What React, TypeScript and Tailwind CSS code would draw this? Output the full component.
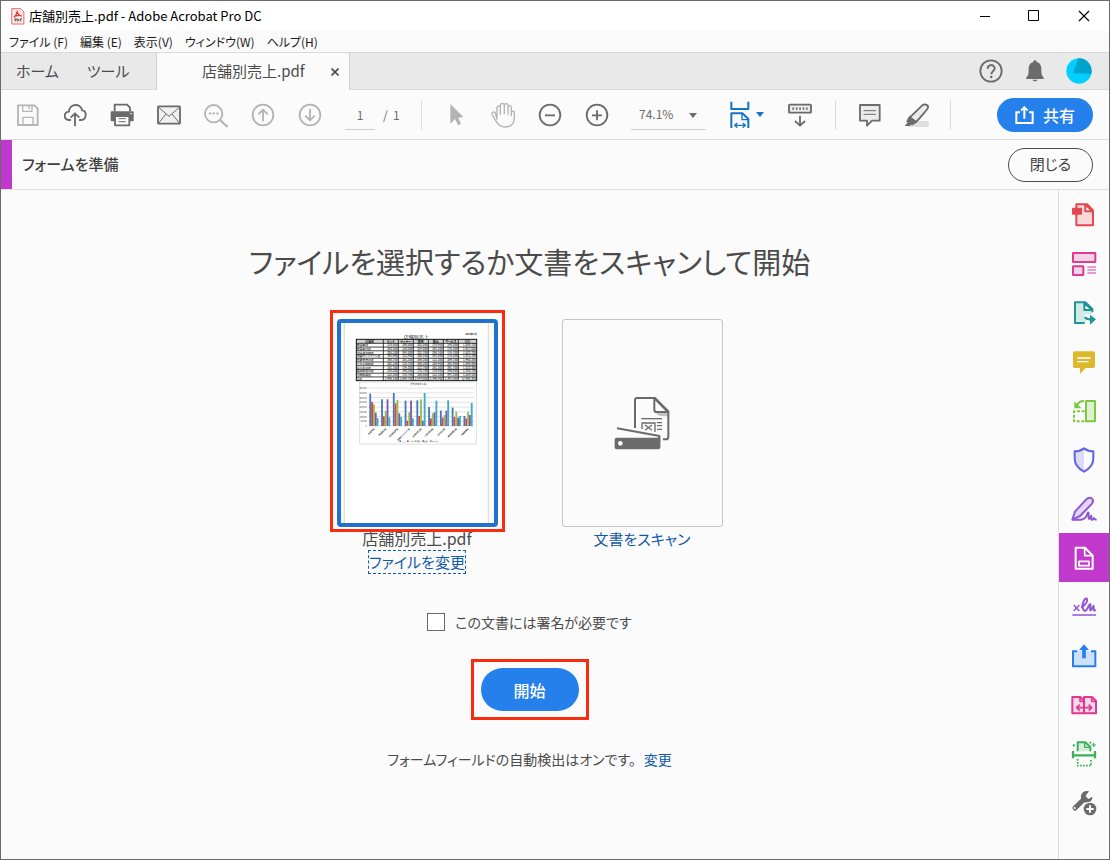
import React from "react";

type IconProps = {
  box: string;
  className?: string;
  weight?: number;
  children: React.ReactNode;
};

function Icon({ box, className = "size-7", weight = 5.5, children }: IconProps) {
  return (
    <svg
      viewBox={box}
      className={`shrink-0 ${className}`}
      fill="none"
      stroke="currentColor"
      strokeWidth={weight}
      strokeLinejoin="round"
      aria-hidden="true"
    >
      {children}
    </svg>
  );
}

function ToolButton({
  label,
  muted = false,
  children,
}: {
  label: string;
  muted?: boolean;
  children: React.ReactNode;
}) {
  return (
    <button
      type="button"
      aria-label={label}
      className={`flex h-10 w-[47px] shrink-0 items-center justify-center ${
        muted ? "text-[#b4b4b4]" : "text-[#6b6b6b]"
      }`}
    >
      {children}
    </button>
  );
}

function Divider() {
  return <div className="h-[30px] w-px shrink-0 bg-[#dcdcdc]" />;
}

function TitleBar() {
  return (
    <header className="flex h-[30px] items-center bg-white pl-[9px] text-[13px] text-black">
      <Icon box="28 22 45 52" className="h-[17px] w-[15px] text-[#f0615f]">
        <path d="M33 24h27l10 10v37H33z" fill="#fdecea" strokeWidth={3} />
        <path
          d="M50 30c-1 8-4 15-10 21M50 36c3 6 7 10 14 11M43 47c6-2 12-3 18-2"
          strokeWidth={3.5}
          stroke="#e5322d"
        />
        <path d="M43 63v-8h4v4h-4M51 63v-8l4 4-4 4M59 63v-8h5M59 59h4" stroke="#222" strokeWidth={2} />
      </Icon>
      <h1 className="ml-1 flex-1 whitespace-nowrap">店舗別売上.pdf - Adobe Acrobat Pro DC</h1>
      <div className="flex h-full text-black">
        <button type="button" aria-label="最小化" className="flex w-[49px] items-center justify-center">
          <svg viewBox="0 0 12 12" className="size-3" stroke="currentColor" aria-hidden="true">
            <path d="M1 6.5h10" />
          </svg>
        </button>
        <button type="button" aria-label="最大化" className="flex w-[49px] items-center justify-center">
          <svg viewBox="0 0 12 12" className="size-3" fill="none" stroke="currentColor" aria-hidden="true">
            <path d="M0.5 0.5h10v10h-10z" />
          </svg>
        </button>
        <button type="button" aria-label="ウィンドウを閉じる" className="flex w-[51px] items-center justify-center">
          <svg viewBox="0 0 12 12" className="size-3" stroke="currentColor" strokeWidth={1.2} aria-hidden="true">
            <path d="M1 1l10 10M11 1L1 11" />
          </svg>
        </button>
      </div>
    </header>
  );
}

const menus = ["ファイル (F)", "編集 (E)", "表示(V)", "ウィンドウ(W)", "ヘルプ(H)"];

function MenuBar() {
  return (
    <nav className="flex h-[21px] items-center gap-3 bg-[#fafafa] pl-2 text-xs text-[#1a1a1a]">
      {menus.map((m) => (
        <button key={m} type="button" className="whitespace-nowrap">
          {m}
        </button>
      ))}
    </nav>
  );
}

function TabBar() {
  return (
    <div className="flex h-[38px] border-y border-[#d9d9d9] bg-[#e9e9e9] text-[15px] text-[#4b4b4b]">
      <div className="flex w-[155px] shrink-0 items-center gap-7 pl-[15px]">
        <button type="button">ホーム</button>
        <button type="button">ツール</button>
      </div>
      <div className="-mb-px flex w-[194px] shrink-0 items-center border-x border-[#d0d0d0] bg-[#fbfbfb] pl-[45px]">
        <span className="flex-1 whitespace-nowrap">店舗別売上.pdf</span>
        <button type="button" aria-label="タブを閉じる" className="flex w-7 items-center justify-center">
          <svg viewBox="0 0 8 8" className="size-2" stroke="currentColor" strokeWidth={1.6} aria-hidden="true">
            <path d="M0.5 0.5l7 7M7.5 0.5l-7 7" />
          </svg>
        </button>
      </div>
      <div className="flex flex-1 items-center justify-end pr-2 text-[#6b6b6b]">
        <button type="button" aria-label="ヘルプ" className="flex w-11 justify-center">
          <Icon box="713 171 84 84">
            <circle cx={755} cy={213} r={32} />
            <path d="M745 206c0-14 21-14 21-1 0 8-10 9-10 18" strokeWidth={6} />
            <circle cx={755.5} cy={231} r={4} fill="currentColor" stroke="none" />
          </Icon>
        </button>
        <button type="button" aria-label="通知" className="flex w-11 justify-center">
          <Icon box="845 173 84 84">
            <path
              d="M887 183c3 0 5 2 5 5 11 3 14 11 14 22 0 16 2 20 7 24v5h-52v-5c5-4 7-8 7-24 0-11 3-19 14-22 0-3 2-5 5-5z"
              fill="currentColor"
              stroke="none"
            />
            <path d="M880 241h14c-1 6-13 6-14 0z" fill="currentColor" stroke="none" />
          </Icon>
        </button>
        <button type="button" aria-label="アカウント" className="flex w-11 justify-center">
          <Icon box="981 173 78 78" className="size-[26px]">
            <circle cx={1020} cy={212} r={38} fill="#00cfff" stroke="none" />
            <path d="M1018 174c22-1 40 16 40 40l-2 7-54-2z" fill="#00a3cc" stroke="none" />
          </Icon>
        </button>
      </div>
    </div>
  );
}

function Toolbar() {
  return (
    <div className="flex h-[50px] items-center border-b border-[#dedede] pr-4 pl-[3px] text-[#6b6b6b]">
      <ToolButton label="保存" muted>
        <Icon box="43 303 84 84">
          <path d="M55 316h49l10 10v49H55z" />
          <path d="M69 316v18h28v-18M88 318v10M70 374v-22h30v22" strokeWidth={4} />
        </Icon>
      </ToolButton>
      <ToolButton label="クラウドに保存">
        <Icon box="183 303 84 84">
          <path d="M213 360h-6c-17-1-17-24 0-25 0-25 36-27 39-4 15-1 15 27-1 29h-8" />
          <path d="M225 379v-38M212 353l13-13 13 13" />
        </Icon>
      </ToolButton>
      <ToolButton label="印刷">
        <Icon box="321 303 84 84">
          <path d="M341 334v-20h37l9 9v11" />
          <rect x={329} y={334} width={69} height={30} rx={3} fill="currentColor" stroke="none" />
          <path d="M342 348h43v28h-43z" fill="#fbfbfb" />
          <path d="M353 356h21M353 365h21" strokeWidth={3} />
          <path d="M388 341h5" stroke="#fff" strokeWidth={3} />
        </Icon>
      </ToolButton>
      <ToolButton label="メールで送信">
        <Icon box="466 302 84 84">
          <rect x={475} y={318} width={66} height={52} rx={2} fill="#f0f0f0" />
          <path d="M477 321l31 27 31-27M477 368l22-27M539 368l-22-27" strokeWidth={3} />
        </Icon>
      </ToolButton>
      <ToolButton label="検索" muted>
        <Icon box="608 303 84 84">
          <circle cx={643} cy={341} r={26} />
          <path d="M662 360l23 21" strokeWidth={7} />
          <g fill="currentColor" stroke="none">
            <circle cx={632} cy={340} r={3.5} />
            <circle cx={643} cy={340} r={3.5} />
            <circle cx={654} cy={340} r={3.5} />
          </g>
        </Icon>
      </ToolButton>
      <ToolButton label="前のページ" muted>
        <Icon box="748 303 84 84">
          <circle cx={790} cy={345} r={31} />
          <path d="M790 364v-34M776 343l14-14 14 14" />
        </Icon>
      </ToolButton>
      <ToolButton label="次のページ" muted>
        <Icon box="889 303 84 84">
          <circle cx={931} cy={345} r={31} />
          <path d="M931 326v34M917 347l14 14 14-14" />
        </Icon>
      </ToolButton>
      <div className="ml-3 flex items-center text-xs">
        <input
          aria-label="ページ番号"
          defaultValue="1"
          className="h-[30px] w-[30px] border-b border-[#d0d0d0] bg-transparent text-center"
        />
        <span className="ml-2 w-[38px] whitespace-pre">/  1</span>
      </div>
      <Divider />
      <div className="ml-[10px] flex">
        <ToolButton label="選択ツール" muted>
          <Icon box="215 153 84 84">
            <path
              d="M240 162l39 39-15 2 8 18-9 5-9-19-14 14z"
              fill="currentColor"
              stroke="none"
            />
          </Icon>
        </ToolButton>
        <ToolButton label="手のひらツール" muted>
          <Icon box="355 154 84 84">
            <path
              d="M379 208v-34c0-7 10-7 10 0v20-26c0-9 12-9 12 0v24-24c0-8 11-8 11 0v26-20c0-8 10-8 10 0v24-8c0-7 9-7 9 0v14c0 20-11 28-28 28-13 0-20-6-26-16l-12-20c-4-8 4-12 9-6z"
              strokeWidth={4}
            />
          </Icon>
        </ToolButton>
        <ToolButton label="縮小">
          <Icon box="497 151 84 84">
            <circle cx={539} cy={193} r={31} />
            <path d="M524 194h30" />
          </Icon>
        </ToolButton>
        <ToolButton label="拡大">
          <Icon box="638 151 84 84">
            <circle cx={680} cy={193} r={31} />
            <path d="M665 194h30M680 179v30" />
          </Icon>
        </ToolButton>
      </div>
      <div className="relative ml-[11px]">
        <select
          aria-label="表示倍率"
          className="h-[30px] w-[75px] appearance-none border-b border-[#d0d0d0] bg-transparent pl-2 text-xs"
        >
          <option>74.1%</option>
        </select>
        <svg viewBox="0 0 8 5" className="pointer-events-none absolute top-[13px] right-[9px] h-[5px] w-2" aria-hidden="true">
          <path d="M0 0h8L4 5z" fill="currentColor" />
        </svg>
      </div>
      <button type="button" aria-label="幅に合わせる" className="ml-5 flex items-center gap-[2px] text-[#1473c8]">
        <Icon box="-4 0 84 84" weight={6}>
          <path d="M12 2v22h51V2M12 81V37h33l18 17v27" />
          <path d="M44 39v17h18" strokeWidth={4} />
          <path d="M22 73h32M30 66l-8 7 8 7M46 66l8 7-8 7" strokeWidth={4} />
        </Icon>
        <svg viewBox="0 0 8 5" className="h-[5px] w-2" aria-hidden="true">
          <path d="M0 0h8L4 5z" fill="currentColor" />
        </svg>
      </button>
      <div className="mr-3 ml-3 flex">
        <ToolButton label="入力パネル">
          <Icon box="138 304 84 84">
            <rect x={147} y={315} width={66} height={24} rx={2} fill="#ececec" />
            <path d="M157 327h46" strokeWidth={7} strokeDasharray="5 5.3" />
            <path d="M180 348v30M165 364l15 14 15-14" strokeWidth={5.5} />
          </Icon>
        </ToolButton>
      </div>
      <Divider />
      <div className="mr-[10px] ml-[10px] flex">
        <ToolButton label="コメント">
          <Icon box="347 303 84 84">
            <path d="M359 315h59v47h-23l-15 15v-15h-21z" fill="#ececec" />
            <path d="M370 332h37M370 343h37" strokeWidth={3} />
          </Icon>
        </ToolButton>
        <ToolButton label="ハイライト">
          <Icon box="489 303 84 84">
            <path d="M519 363h47v18h-61z" fill="#dedede" stroke="none" />
            <path d="M509 353l37-36c6-6 20-4 18 6-1 5-33 41-36 43z" fill="#ececec" />
            <path d="M509 352l19 14-12 7-14-9z" fill="currentColor" />
            <path d="M504 366l10 7-5 5h-15z" fill="currentColor" stroke="none" />
          </Icon>
        </ToolButton>
      </div>
      <Divider />
      <button
        type="button"
        className="ml-auto flex h-[34px] w-24 shrink-0 items-center justify-center gap-[9px] rounded-full bg-[#2680eb] text-base font-medium text-white"
      >
        <Icon box="824 315 57 54" className="h-[18px] w-[19px]" weight={6}>
          <path d="M839 334h-11v32h49v-32h-11M852 353v-34M842 329l10-10 10 10" strokeLinejoin="miter" />
        </Icon>
        共有
      </button>
    </div>
  );
}

function FormBar() {
  return (
    <div className="flex h-[50px] items-center border-b border-[#dedede] pr-4 text-[15px] text-[#3f3f3f]">
      <div className="h-full w-[11px] bg-[#c038cc]" />
      <h2 className="ml-[10px] flex-1 font-medium">フォームを準備</h2>
      <button type="button" className="h-[34px] w-[85px] rounded-full border border-[#4b4b4b]">
        閉じる
      </button>
    </div>
  );
}

const tableRows = [
  ["新宿本店", "378,800", "398,000", "302,500", "278,900", "198,500", "1,556,700"],
  ["新宿東口店", "363,500", "210,000", "314,000", "361,200", "178,300", "1,427,000"],
  ["渋谷道玄坂店", "385,200", "341,000", "332,700", "298,100", "176,700", "1,533,700"],
  ["池袋サンシャイン店", "361,900", "122,400", "288,100", "361,500", "178,200", "1,312,100"],
  ["吉祥寺南口店", "360,700", "201,300", "386,300", "122,300", "389,700", "1,460,300"],
  ["八王子駅前店", "301,200", "178,700", "260,200", "288,400", "361,900", "1,390,400"],
  ["立川北口店", "281,100", "176,300", "222,700", "281,500", "361,700", "1,323,300"],
  ["横浜駅西口店", "293,500", "198,300", "278,700", "176,400", "198,800", "1,145,700"],
  ["川崎駅東店", "222,300", "178,700", "288,800", "222,100", "347,200", "1,259,100"],
  ["合計", "2,948,200", "2,004,700", "2,674,000", "2,390,400", "2,391,000", "12,408,300"],
];
const tableHead = ["店舗名", "ランチ", "ディナー", "喫茶", "雑貨", "サービス", "合計"];
const columnEdges = [78, 160, 205, 250, 295, 340, 385, 440];
const barTops = [
  [266, 291, 298, 323, 339],
  [283, 334, 318, 283, 337],
  [264, 295, 285, 325, 336],
  [287, 347, 322, 287, 340],
  [286, 333, 283, 347, 264],
  [306, 340, 325, 322, 287],
  [317, 338, 330, 317, 286],
  [308, 336, 320, 338, 333],
  [333, 340, 320, 330, 294],
];
const barColors = ["#4679bd", "#d64548", "#98bc4e", "#7c5ba4", "#3fa9c8"];

function Thumbnail() {
  return (
    <svg viewBox="33 54 459 600" className="h-[200px] w-[153px]" role="img" aria-label="店舗別売上.pdf のプレビュー">
      <rect x={33} y={54} width={459} height={600} fill="#fafafa" />
      <rect x={43} y={48} width={432} height={612} fill="#fff" stroke="#dfdfdf" strokeWidth={4} />
      <g fill="#111" textAnchor="middle">
        <text x={259} y={101} fontSize={15}>店舗別売上</text>
        <text x={423} y={89} fontSize={7} fontWeight={700}>2018年3月</text>
        <rect x={78} y={103} width={362} height={12} fill="#d4d4d4" />
        {tableHead.map((h, i) => (
          <text key={h} x={(columnEdges[i] + columnEdges[i + 1]) / 2} y={113} fontSize={9} fontWeight={700}>
            {h}
          </text>
        ))}
        {tableRows.map((row, r) =>
          row.map((cell, c) => (
            <text
              key={`${r}-${c}`}
              x={c === 0 ? 80 : columnEdges[c + 1] - 2}
              y={123.5 + r * 11.2}
              fontSize={8.5}
              fontWeight={500}
              textAnchor={c === 0 ? "start" : "end"}
            >
              {cell}
            </text>
          )),
        )}
      </g>
      <g stroke="#111" strokeWidth={2.4} fill="none">
        <rect x={79} y={103} width={361} height={124} strokeWidth={3} />
        {tableRows.map((_, r) => (
          <path key={r} d={`M78 ${115 + r * 11.2}H440`} />
        ))}
        {columnEdges.slice(1, 7).map((x) => (
          <path key={x} d={`M${x} 103V227`} />
        ))}
      </g>
      <rect x={89} y={231} width={350} height={186} fill="#fff" stroke="#dedede" strokeWidth={3} />
      <text x={264} y={241} fontSize={8} textAnchor="middle" fontWeight={500} fill="#222">
        グラフタイトル
      </text>
      {[0, 1, 2, 3, 4, 5, 6, 7, 8].map((i) => (
        <g key={i}>
          <path d={`M115 ${363 - i * 14.2}H433`} stroke="#d4d4d4" strokeWidth={2} />
          <text x={110} y={366 - i * 14.2} fontSize={6} textAnchor="end" fill="#333">
            {i === 0 ? "0" : `${i * 50},000`}
          </text>
        </g>
      ))}
      {barTops.map((group, g) => (
        <g key={g}>
          {group.map((top, b) => (
            <rect
              key={b}
              x={118 + g * 35.3 + b * 5.5}
              y={top}
              width={5.5}
              height={363 - top}
              fill={barColors[b]}
            />
          ))}
          <text
            fontSize={6}
            fontWeight={700}
            fill="#222"
            textAnchor="end"
            transform={`translate(${134 + g * 35.3} 372) rotate(-45)`}
          >
            {tableRows[g][0]}
          </text>
        </g>
      ))}
      {tableHead.slice(1, 6).map((h, i) => (
        <g key={h}>
          <rect x={208 + i * 23} y={406} width={5} height={5} fill={barColors[i]} />
          <text x={214 + i * 23} y={411} fontSize={5} fill="#222">
            {h}
          </text>
        </g>
      ))}
    </svg>
  );
}

function ScannerIcon() {
  return (
    <Icon box="195 259 168 162" className="h-[54px] w-14 text-[#6b6b6b]">
      <path d="M323 309h34v10c-10 2-28 1-34-5z" fill="#c4c4c4" stroke="none" />
      <path d="M258 355v-84q0-6 6-6h54l40 40v76q0 8-8 8h-8" strokeWidth={6} />
      <path d="M316 266v34q0 7 7 7h34z" fill="#fff" strokeWidth={6} />
      <path d="M277 327h62" strokeWidth={4} />
      <path d="M279 358v-18h39v27" strokeWidth={4} />
      <path d="M288 346l21 16M309 346l-21 16" strokeWidth={3.5} />
      <path d="M324 339h15M324 348h15M324 359h15" strokeWidth={4} />
      <path d="M204 356l128 23" strokeWidth={6} />
      <rect x={197} y={384} width={137} height={35} rx={6} fill="currentColor" stroke="none" />
      <path d="M327 377h7v20h-7z" fill="currentColor" stroke="none" />
      <circle cx={214} cy={401} r={7} fill="#fff" stroke="none" />
    </Icon>
  );
}

const linkStyle = "text-[#1259a8]";

function Content() {
  return (
    <main className="flex flex-1 flex-col items-center pt-[51px] text-[#4b4b4b]">
      <h2 className="text-[29px] leading-10 whitespace-nowrap">
        ファイルを選択するか文書をスキャンして開始
      </h2>
      <div className="mt-[38px] flex gap-16 text-[15px] leading-6">
        <div className="flex w-[161px] flex-col items-center">
          <div className="relative">
            <button type="button" className="block overflow-hidden rounded-[4px] border-4 border-[#1f73cc]">
              <Thumbnail />
            </button>
            <div className="pointer-events-none absolute -inset-x-[7px] -top-[9px] -bottom-[5px] border-3 border-[#fa2c0e]" />
          </div>
          <span className="text-base leading-[23px] whitespace-nowrap">店舗別売上.pdf</span>
          <a href="#change-file" className={`border border-dashed border-[#1259a8] leading-[22px] whitespace-nowrap ${linkStyle}`}>
            ファイルを変更
          </a>
        </div>
        <div className="flex w-[161px] flex-col items-center">
          <button
            type="button"
            aria-label="スキャナーを選択"
            className="flex h-[208px] w-full items-center justify-center rounded-[3px] border border-[#c6c6c6]"
          >
            <ScannerIcon />
          </button>
          <a href="#scan" className={`whitespace-nowrap ${linkStyle}`}>
            文書をスキャン
          </a>
        </div>
      </div>
      <label className="mt-9 flex items-center gap-[10px] text-sm leading-6">
        <input
          type="checkbox"
          className="size-[18px] appearance-none border border-[#6b6b6b] bg-white checked:bg-[#2680eb]"
        />
        この文書には署名が必要です
      </label>
      <div className="mt-[25px] border-3 border-[#fa2c0e] px-[7px] py-[6px]">
        <button type="button" className="block h-[43px] w-[98px] rounded-full bg-[#2680eb] text-base font-medium text-white">
          開始
        </button>
      </div>
      <p className="mt-[27px] flex gap-2 text-sm leading-6 whitespace-nowrap">
        フォームフィールドの自動検出はオンです。
        <a href="#auto-detect" className={linkStyle}>
          変更
        </a>
      </p>
    </main>
  );
}

type Tool = { name: string; color: string; box: string; active?: boolean; art: React.ReactNode };

const tools: Tool[] = [
  {
    name: "PDFを作成",
    color: "text-[#e34850]",
    box: "60 30 84 84",
    art: (
      <>
        <path d="M79 72v31h50V58l-17-18H79z" fill="#f7d9da" />
        <path d="M106 41v20h22z" fill="#fff" />
        <rect x={66} y={50} width={30} height={21} rx={3} fill="currentColor" stroke="none" />
      </>
    ),
  },
  {
    name: "ページを整理",
    color: "text-[#dd3a91]",
    box: "60 178 84 84",
    art: (
      <>
        <rect x={69} y={187} width={67} height={27} rx={1} fill="#f3d3e5" />
        <rect x={69} y={227} width={31} height={26} rx={1} fill="#f3d3e5" />
        <path d="M112 229h26M112 238h26M112 247h26" strokeWidth={3} />
      </>
    ),
  },
  {
    name: "PDFを書き出し",
    color: "text-[#1f9498]",
    box: "60 325 84 84",
    art: (
      <>
        <path d="M104 397H75V335h32l20 20v10" fill="#d3ebe7" />
        <path d="M103 337v21h23z" fill="#fff" />
        <path d="M104 379h17" stroke="#fbfbfb" strokeWidth={16} />
        <path d="M104 380q6 7 18 6" strokeWidth={7} />
        <path d="M120 372l18 14-18 16z" fill="currentColor" stroke="none" />
      </>
    ),
  },
  {
    name: "注釈",
    color: "text-[#dcb92c]",
    box: "60 473 84 84",
    art: (
      <>
        <path d="M74 483h56q5 0 5 5v40q0 5-5 5h-23l-17 18v-18H74q-5 0-5-5v-40q0-5 5-5z" fill="currentColor" stroke="none" />
        <path d="M82 503h39M82 514h33" stroke="#fff" strokeWidth={4} />
      </>
    ),
  },
  {
    name: "スキャンを補正",
    color: "text-[#7bc93f]",
    box: "60 35 84 84",
    art: (
      <>
        <rect x={108} y={47} width={27} height={61} fill="#dff2d0" />
        <path d="M104 78H72v30h32" strokeDasharray="9 5" />
        <path d="M102 47q-16 0-22 14" strokeWidth={6} />
        <path d="M73 48v21h22z" fill="currentColor" stroke="none" />
      </>
    ),
  },
  {
    name: "保護",
    color: "text-[#6464e8]",
    box: "60 184 84 84",
    art: (
      <>
        <path d="M102 191v70c-18-9-27-24-27-41v-20q17 0 27-9z" fill="#dcdcf8" stroke="none" />
        <path d="M102 191c8 6 16 9 28 9v20c0 17-10 32-28 41-18-9-28-24-28-41v-20c12 0 20-3 28-9z" />
      </>
    ),
  },
  {
    name: "入力と署名",
    color: "text-[#8f56d6]",
    box: "60 330 84 84",
    art: (
      <>
        <path d="M67 404l8-24 33-36q10-10 18-3 7 7-2 17l-34 35z" fill="#e4d7f5" />
        <path d="M67 404h26q14-1 19-17 3-8 4-1v14q3 5 8-8v11q4 3 8-4 2 6 8 4" />
      </>
    ),
  },
  {
    name: "フォームを準備",
    color: "text-white",
    box: "62 478 84 84",
    active: true,
    art: (
      <>
        <path d="M79 489h28l23 24v39H79z" />
        <path d="M106 489v24h24zM89 530h30v13H89z" strokeWidth={5} />
      </>
    ),
  },
  {
    name: "電子サインを依頼",
    color: "text-[#8f56d6]",
    box: "60 38 84 84",
    art: (
      <>
        <path d="M67 104h71M71 74l17 18M88 74L71 92" strokeWidth={4.5} />
        <path d="M93 80c12-3 21-17 18-24-5-7-16 12-13 25 3 14 9 14 15 2 5-11 10-17 8-4-2 13 1 15 6 3 4-8 5-8 4 1 0 8 2 10 6 5" />
      </>
    ),
  },
  {
    name: "共有",
    color: "text-[#2680eb]",
    box: "60 186 84 84",
    art: (
      <>
        <path d="M82 214H69v45h67v-45h-13" fill="#cfe1f8" strokeLinejoin="miter" />
        <path d="M82 212h40v10H82z" fill="#cfe1f8" stroke="none" />
        <path d="M102 235v-28" strokeWidth={11} />
        <path d="M102 193l15 17H87z" fill="currentColor" stroke="none" />
      </>
    ),
  },
  {
    name: "ファイルを比較",
    color: "text-[#dd3a91]",
    box: "60 336 84 84",
    art: (
      <>
        <path d="M67 354h24l11 11v38H67zM102 403V354h24l12 11v38z" fill="#f7d7e8" />
        <path d="M90 354v13h12M125 354v13h13" strokeWidth={5} />
        <path d="M80 386h45M89 377l-9 9 9 9M116 377l9 9-9 9" strokeWidth={5} />
      </>
    ),
  },
  {
    name: "スキャンとOCR",
    color: "text-[#3db157]",
    box: "60 483 84 84",
    art: (
      <>
        <path d="M83 517v-27h23l15 14v13" fill="#d6efda" />
        <path d="M104 491v14h16" strokeWidth={4} />
        <path d="M69 516v22M135 516v22M69 529h66" strokeWidth={7} />
        <path d="M83 540v20h40v-20" strokeWidth={5} strokeDasharray="5 4" />
        <path d="M131 491v13M124 498h14M121 488v6M118 491h6M71 496v7M68 499h7" strokeWidth={3.5} />
      </>
    ),
  },
  {
    name: "その他のツール",
    color: "text-[#6b6b6b]",
    box: "62 631 84 84",
    art: (
      <>
        <path d="M77 688l29-28" strokeWidth={15} strokeLinecap="round" />
        <path
          d="M119 638q-18-4-24 12-2 12 8 19 12 6 22-2 5-5 4-13l-12 7-9-8z"
          fill="currentColor"
          stroke="none"
        />
        <circle cx={76} cy={688} r={3} fill="#fff" stroke="none" />
        <circle cx={122} cy={691} r={22} fill="#fbfbfb" stroke="none" />
        <circle cx={122} cy={691} r={19} fill="currentColor" stroke="none" />
        <path d="M111 691h22M122 680v22" stroke="#fff" />
      </>
    ),
  },
];

function ToolRail() {
  return (
    <aside className="w-[51px] shrink-0 border-l border-[#dedede]">
      {tools.map((t) => (
        <button
          key={t.name}
          type="button"
          aria-label={t.name}
          className={`flex h-[49px] w-full items-center justify-center ${t.color} ${
            t.active ? "bg-[#c038cc]" : ""
          }`}
        >
          <Icon box={t.box} weight={6}>{t.art}</Icon>
        </button>
      ))}
    </aside>
  );
}

export default function App() {
  return (
    <div
      lang="ja"
      className="flex min-h-screen flex-col border border-[#6b6b6b] bg-[#fbfbfb] font-['Noto_Sans_CJK_JP',sans-serif] [font-feature-settings:'palt']"
    >
      <TitleBar />
      <MenuBar />
      <TabBar />
      <Toolbar />
      <FormBar />
      <div className="flex flex-1">
        <Content />
        <ToolRail />
      </div>
    </div>
  );
}
